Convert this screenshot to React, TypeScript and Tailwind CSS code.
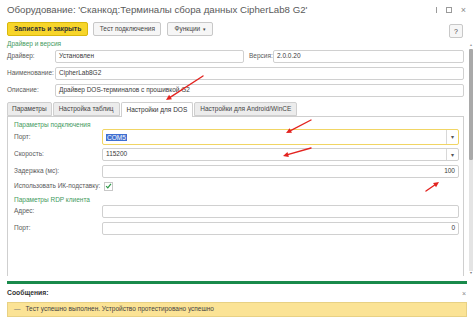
import React from "react";

function Field({
  value,
  right,
  dropdown,
  focused,
  className = "",
}: {
  value?: string;
  right?: boolean;
  dropdown?: boolean;
  focused?: boolean;
  className?: string;
}) {
  return (
    <div
      className={
        "flex items-stretch bg-white rounded-[2px] " +
        (focused
          ? "border-[1.5px] border-[#f1d564] "
          : "border border-[#d0d0d0] ") +
        className
      }
    >
      <div
        className={
          "flex-1 flex items-center px-[3px] text-[#3a3a3a] " +
          (right ? "justify-end" : "")
        }
      >
        {value === "COM5" ? (
          <span className="bg-[#3f6fd1] text-white px-[1px] leading-[7px]">COM5</span>
        ) : (
          value
        )}
      </div>
      {dropdown && (
        <div className="w-[12px] border-l border-[#d8d8d8] flex items-center justify-center text-[#555] text-[6px]">
          ▾
        </div>
      )}
    </div>
  );
}

function Row({
  label,
  children,
  className = "",
}: {
  label: string;
  children: React.ReactNode;
  className?: string;
}) {
  return (
    <div className={"flex items-center " + className}>
      <div className="w-[88px] shrink-0 text-[#5a5a5a]">{label}</div>
      <div className="flex-1 h-full">{children}</div>
    </div>
  );
}

function Arrow({ x1, y1, x2, y2 }: { x1: number; y1: number; x2: number; y2: number }) {
  const ang = Math.atan2(y2 - y1, x2 - x1);
  const L = 6;
  const w = 0.45;
  const ax = x2 - L * Math.cos(ang - w);
  const ay = y2 - L * Math.sin(ang - w);
  const bx = x2 - L * Math.cos(ang + w);
  const by = y2 - L * Math.sin(ang + w);
  return (
    <g>
      <line x1={x1} y1={y1} x2={x2 - 3 * Math.cos(ang)} y2={y2 - 3 * Math.sin(ang)} stroke="#e3231f" strokeWidth={1.4} strokeLinecap="round" />
      <polygon points={`${x2},${y2} ${ax},${ay} ${bx},${by}`} fill="#e3231f" />
    </g>
  );
}

export default function App() {
  return (
    <div className="w-[474px] h-[324px] bg-white relative overflow-hidden font-['Liberation_Sans',Arial,sans-serif] text-[6.5px] leading-none text-[#4d4d4d]">
      {/* Title */}
      <div className="h-[20px] flex items-center pl-[7px] pr-[8px]">
        <div className="flex-1 text-[9.7px] text-[#5a5a5a] whitespace-nowrap">
          Оборудование: 'Сканкод:Терминалы сбора данных CipherLab8 G2'
        </div>
        <div className="flex items-center gap-[9px] text-[#8a8a8a]">
          <div className="w-[1px] h-[6px] bg-[#9a9a9a]" />
          <div className="w-[6px] h-[6px] border border-[#9a9a9a]" />
          <div className="text-[9px] leading-none">×</div>
        </div>
      </div>

      {/* Toolbar */}
      <div className="h-[18px] flex items-start pl-[7px] pr-[11px] pt-[2px]">
        <div className="h-[14px] px-[6px] flex items-center rounded-[2px] bg-[#f7d52a] border border-[#d9b80c] text-[#333] font-bold text-[6.8px]">
          Записать и закрыть
        </div>
        <div className="ml-[5px] h-[14px] w-[68px] flex items-center justify-center rounded-[2px] bg-[#f6f6f6] border border-[#c8c8c8] text-[#444]">
          Тест подключения
        </div>
        <div className="ml-[6px] h-[14px] w-[46px] flex items-center justify-center gap-[3px] rounded-[2px] bg-[#f6f6f6] border border-[#c8c8c8] text-[#444]">
          <span>Функции</span>
          <span className="text-[5px]">▾</span>
        </div>
        <div className="flex-1" />
        <div className="mt-[2px] w-[14px] h-[14px] flex items-center justify-center rounded-[2px] bg-[#f6f6f6] border border-[#c8c8c8] text-[#444] text-[7px]">
          ?
        </div>
      </div>

      {/* Main */}
      <div className="flex h-[238px]">
        <div className="w-[464px] pl-[7px] flex flex-col">
          <div className="h-[12px] flex items-center text-[#3f9a5e] pt-[1px]">Драйвер и версия</div>
          <div className="flex items-center h-[13px] mt-[0px]">
            <div className="w-[48px] text-[#5a5a5a]">Драйвер:</div>
            <Field value="Установлен" className="w-[189px] h-full" />
            <div className="ml-[5px] w-[21px] text-[#5a5a5a] whitespace-nowrap">Версия:</div>
            <Field value="2.0.0.20" className="flex-1 h-full ml-[3px]" />
          </div>
          <div className="flex items-center h-[13px] mt-[4px]">
            <div className="w-[48px] text-[#5a5a5a] whitespace-nowrap">Наименование:</div>
            <Field value="CipherLab8G2" className="flex-1 h-full" />
          </div>
          <div className="flex items-center h-[13px] mt-[4px]">
            <div className="w-[48px] text-[#5a5a5a]">Описание:</div>
            <Field value="Драйвер DOS-терминалов с прошивкой G2" className="flex-1 h-full" />
          </div>

          {/* Tabs */}
          <div className="flex items-end h-[19px] mt-[0px]">
            <div className="h-[14px] px-[4px] flex items-center bg-[#ececec] border border-[#cfcfcf] rounded-t-[2px] text-[#444]">
              Параметры
            </div>
            <div className="ml-[1px] h-[14px] px-[5px] flex items-center bg-[#ececec] border border-[#cfcfcf] rounded-t-[2px] text-[#444]">
              Настройка таблиц
            </div>
            <div className="ml-[1px] h-[15px] px-[5px] flex items-center bg-white border border-b-0 border-[#cfcfcf] rounded-t-[2px] text-[#333] relative top-[1px]">
              Настройки для DOS
            </div>
            <div className="ml-[1px] h-[14px] px-[5px] flex items-center bg-[#ececec] border border-[#cfcfcf] rounded-t-[2px] text-[#444]">
              Настройки для Android/WinCE
            </div>
          </div>

          {/* Panel */}
          <div className="flex-1 border border-[#cfcfcf] border-b-0 pl-[6px] pr-[4px] flex flex-col">
            <div className="h-[11px] flex items-end text-[#3f9a5e]">Параметры подключения</div>
            <Row label="Порт:" className="h-[16px] mt-[1px]">
              <Field value="COM5" dropdown focused className="h-full" />
            </Row>
            <Row label="Скорость:" className="h-[13px] mt-[3px]">
              <Field value="115200" dropdown className="h-full" />
            </Row>
            <Row label="Задержка (мс):" className="h-[13px] mt-[4px]">
              <Field value="100" right className="h-full" />
            </Row>
            <Row label="Использовать ИК-подставку:" className="h-[10px] mt-[3px] whitespace-nowrap">
              <div className="h-full flex items-center pl-[2px]">
                <div className="w-[9px] h-[9px] border border-[#c8c8c8] bg-white flex items-center justify-center">
                  <svg width="8" height="8" viewBox="0 0 8 8">
                    <path d="M1.3 4.2 L3.2 6.2 L6.8 1.5" fill="none" stroke="#2f9a49" strokeWidth="1.4" />
                  </svg>
                </div>
              </div>
            </Row>
            <div className="h-[12px] flex items-end text-[#3f9a5e]">Параметры RDP клиента</div>
            <Row label="Адрес:" className="h-[13px] mt-[2px]">
              <Field className="h-full" />
            </Row>
            <Row label="Порт:" className="h-[13px] mt-[4px]">
              <Field value="0" right className="h-full" />
            </Row>
          </div>
        </div>

        {/* Scrollbar */}
        <div className="ml-[5px] w-[4px] flex flex-col pt-[5px] pb-[1px]">
          <div className="h-[4px] text-[4px] text-[#999] flex justify-center">▴</div>
          <div className="h-[111px] bg-[#a9a9a9] rounded-[1px] mt-[2px]" />
          <div className="flex-1 bg-[#e4e4e4]" />
          <div className="h-[4px] text-[4px] text-[#777] flex justify-center">▾</div>
        </div>
      </div>

      {/* Messages */}
      <div className="pl-[7px] pr-[7px]">
        <div className="h-[3px] bg-[#198a4b] mt-[5px]" />
        <div className="h-[13px] flex items-center justify-between mt-[3px]">
          <span className="font-bold text-[#333] text-[6.8px]">Сообщения:</span>
          <span className="text-[#888] text-[7px] mr-[1px]">×</span>
        </div>
        <div className="h-[15px] mt-[2px] bg-[#fbe395] border border-[#e8d184] flex items-center pl-[6px] gap-[5px] text-[#444]">
          <span className="text-[#777]">—</span>
          <span>Тест успешно выполнен. Устройство протестировано успешно</span>
        </div>
      </div>

      {/* Red annotation arrows */}
      <svg className="absolute left-0 top-0 pointer-events-none" width="474" height="324">
        <Arrow x1={203} y1={76} x2={166} y2={100} />
        <Arrow x1={311} y1={120} x2={286} y2={133} />
        <Arrow x1={311} y1={148} x2={283} y2={156} />
        <Arrow x1={426} y1={191} x2={439} y2={182} />
      </svg>
    </div>
  );
}
